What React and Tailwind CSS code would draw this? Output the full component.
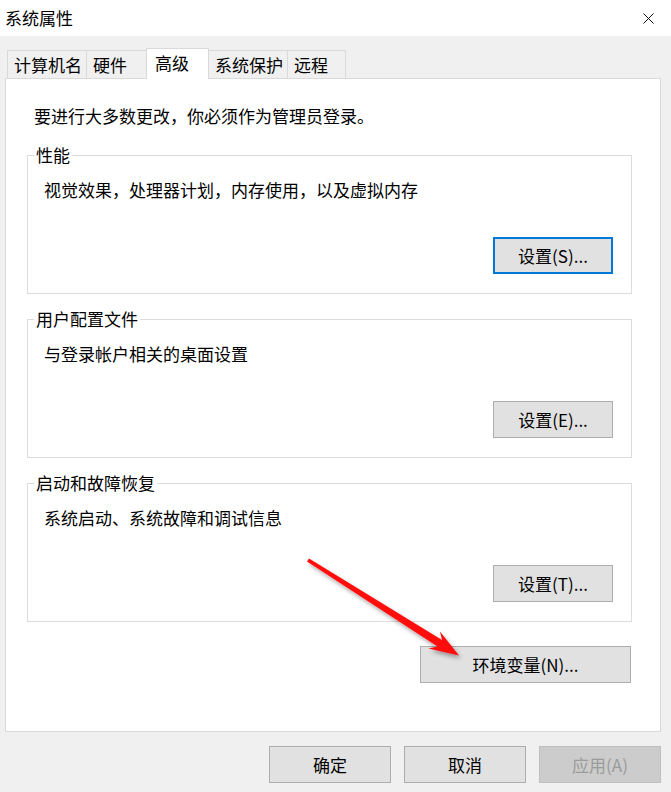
const tabs = [
  { name: '计算机名', w: 'w-[80px]' },
  { name: '硬件', w: 'w-[61px]' },
  { name: '高级', w: 'w-[63px]', active: true },
  { name: '系统保护', w: 'w-[80px]' },
  { name: '远程', w: 'w-[59px]' },
]

const groups = [
  { title: '性能', desc: '视觉效果，处理器计划，内存使用，以及虚拟内存', btn: '设置(S)...', focus: true },
  { title: '用户配置文件', desc: '与登录帐户相关的桌面设置', btn: '设置(E)...' },
  { title: '启动和故障恢复', desc: '系统启动、系统故障和调试信息', btn: '设置(T)...' },
]

const Group = ({ title, desc, btn, focus }) => (
  <fieldset className="border border-[#dcdcdc]">
    <legend className="ml-[6px] px-[2px] leading-[20px]">{title}</legend>
    <div className="pl-[16px] pt-[14px] h-[36px] leading-[22px]">{desc}</div>
    <div className="flex justify-end pr-[18px] mt-[36px] pb-[19px]">
      <button
        className={
          focus
            ? 'w-[120px] h-[37px] bg-[#e1e1e1] border-2 border-[#0078d7] flex items-center justify-center'
            : 'w-[120px] h-[37px] bg-[#e1e1e1] border border-[#adadad] flex items-center justify-center'
        }
      >
        {btn}
      </button>
    </div>
  </fieldset>
)

const App = () => {
  return (
    <div className="relative w-[671px] h-[792px] bg-[#f0f0f0] flex flex-col text-[17px] text-black font-['Noto_Sans_CJK_SC','Noto_Sans',sans-serif] overflow-hidden">
      {/* title bar */}
      <div className="h-[36px] bg-white flex items-center justify-between pl-[5px] pr-[17px]">
        <span className="leading-[22px]">系统属性</span>
        <svg width="11" height="11" viewBox="0 0 11 11">
          <path d="M0.5 0.5 L10.5 10.5 M10.5 0.5 L0.5 10.5" stroke="#111" strokeWidth="1" fill="none" />
        </svg>
      </div>

      {/* tabs */}
      <div className="mt-[12px] ml-[7px] h-[30px] flex items-end">
        {tabs.map((t, i) => (
          <div
            key={t.name}
            className={
              (i > 0 ? '-ml-px ' : '') +
              t.w +
              (t.active
                ? ' relative z-10 h-[31px] -mb-px bg-white border-t border-l border-r border-[#d9d9d9] pl-[8px] pt-[3px] leading-[22px]'
                : ' h-[28px] bg-[#f0f0f0] border-t border-l border-r border-[#d9d9d9] pl-[6px] pt-[3px] leading-[22px]')
            }
          >
            {t.name}
          </div>
        ))}
      </div>

      {/* panel */}
      <div className="ml-[5px] w-[656px] h-[654px] bg-white border border-[#d9d9d9] pt-[26px] pl-[21px] pr-[28px]">
        <p className="ml-[7px] leading-[22px]">要进行大多数更改，你必须作为管理员登录。</p>
        <div className="mt-[18px] flex flex-col gap-[15px]">
          {groups.map((g) => (
            <Group key={g.title} {...g} />
          ))}
        </div>
        <div className="mt-[24px] flex justify-end pr-[1px]">
          <button className="w-[211px] h-[37px] bg-[#e1e1e1] border border-[#adadad] flex items-center justify-center">
            环境变量(N)...
          </button>
        </div>
      </div>

      {/* dialog buttons */}
      <div className="mt-[14px] flex justify-end gap-[13px] pr-[10px]">
        <button className="w-[122px] h-[37px] bg-[#e1e1e1] border border-[#adadad] flex items-center justify-center">确定</button>
        <button className="w-[122px] h-[37px] bg-[#e1e1e1] border border-[#adadad] flex items-center justify-center">取消</button>
        <button className="w-[122px] h-[37px] bg-[#cccccc] border border-[#bfbfbf] text-[#9b9b9b] flex items-center justify-center">应用(A)</button>
      </div>

      {/* red annotation arrow */}
      <svg className="absolute inset-0 pointer-events-none" width="671" height="792" viewBox="0 0 671 792">
        <defs>
          <filter id="sh" x="-20%" y="-20%" width="140%" height="140%">
            <feDropShadow dx="2" dy="3" stdDeviation="2" floodColor="#000" floodOpacity="0.35" />
          </filter>
        </defs>
        <path
          filter="url(#sh)"
          fill="#ff0a0a"
          d="M307 561.5 L309 558.5 L442 640 L440 631.5 L459 655.5 L428.5 648.5 L437.5 646.5 Z"
        />
      </svg>
    </div>
  )
}

export default App
